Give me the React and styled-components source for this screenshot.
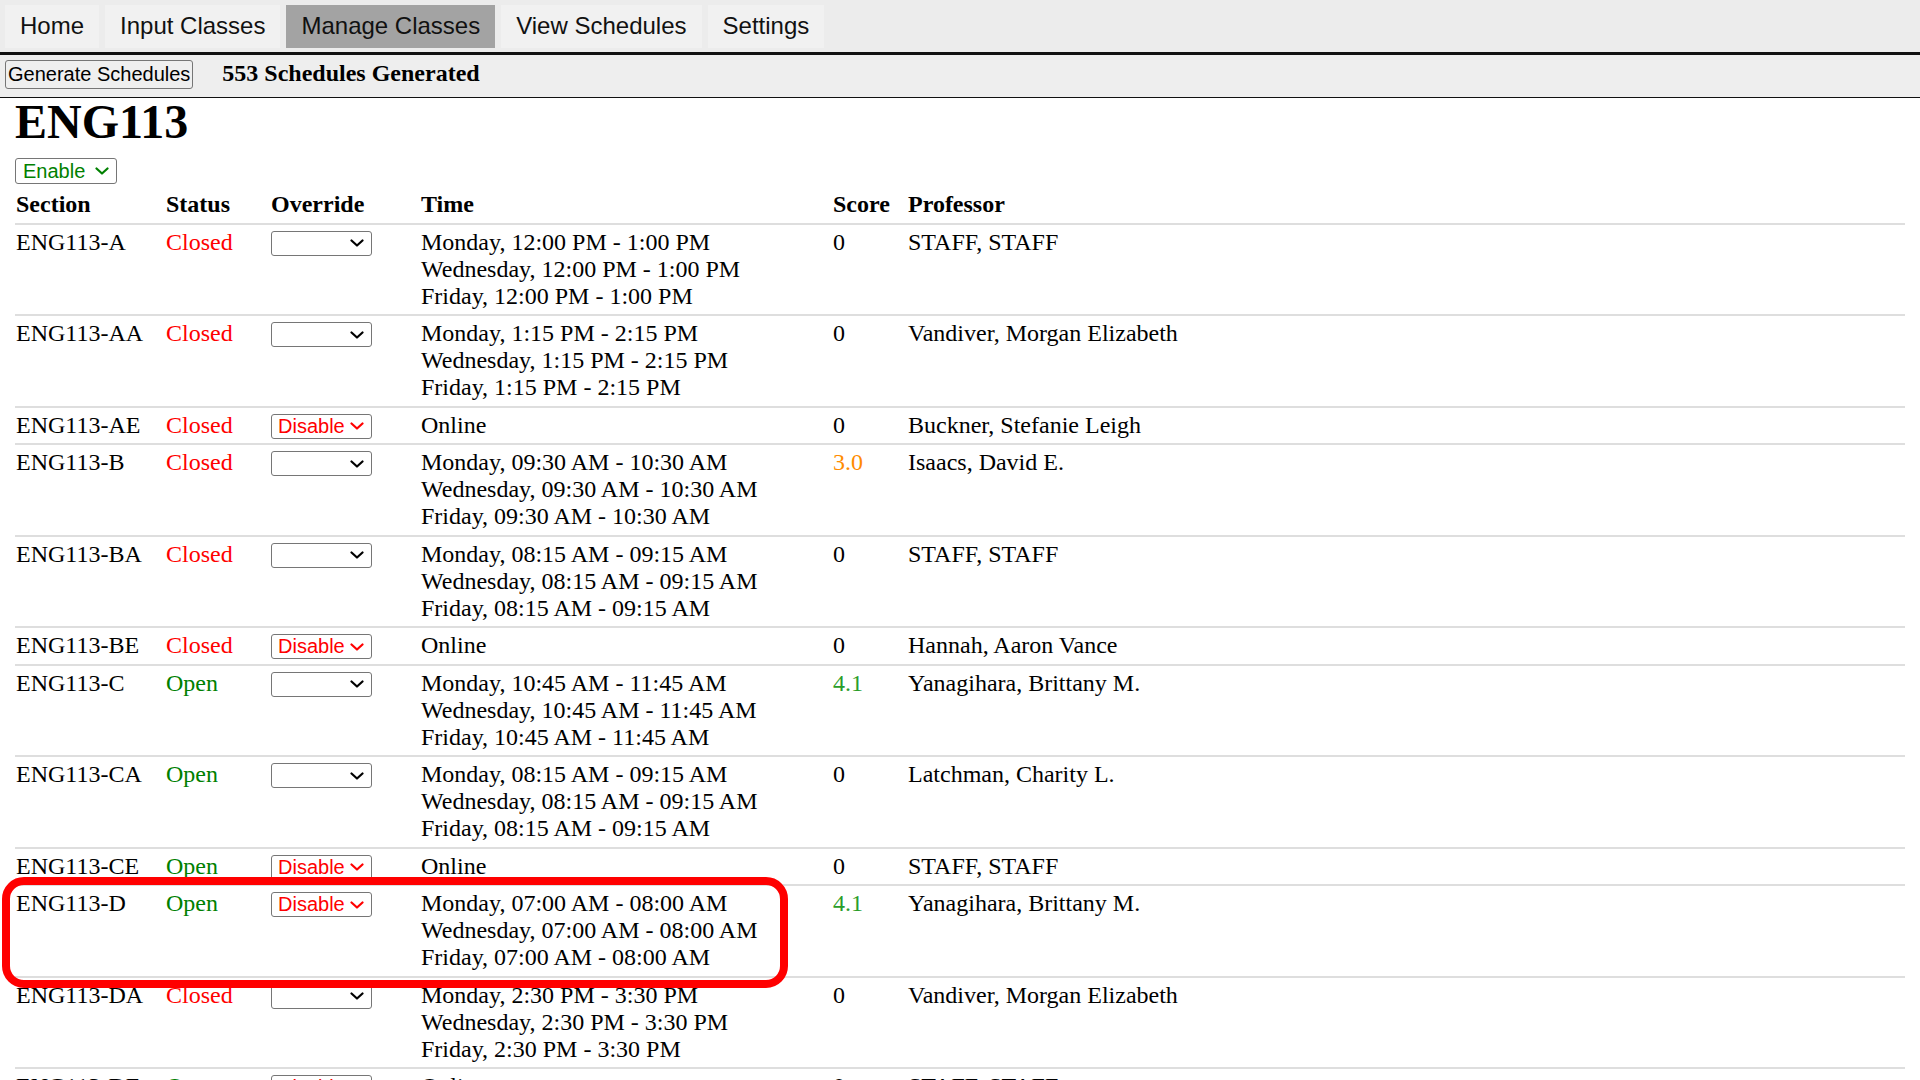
import React from "react";
import styled, { createGlobalStyle } from "styled-components";

const GlobalStyle = createGlobalStyle`
  html, body { margin: 0; padding: 0; overflow: hidden; background: #fff; }
  body { font-family: "Liberation Serif", "Times New Roman", serif; color: #000; }
`;

const Page = styled.div`
  position: relative;
  width: 1920px;
`;

const NavBar = styled.nav`
  display: flex;
  gap: 6px;
  height: 55px;
  box-sizing: border-box;
  padding: 5px 5px 0;
  background: #ececec;
  border-bottom: 3px solid #111;
`;

const NavItem = styled.a`
  display: block;
  height: 43px;
  box-sizing: border-box;
  padding: 7px 15px 9px;
  font-family: "Liberation Sans", Arial, sans-serif;
  font-size: 24px;
  line-height: 27px;
  color: #111;
  text-decoration: none;
  background: ${(p) => (p.$active ? "#a3a3a3" : "#f1f1f1")};
`;

const ActionBar = styled.div`
  display: flex;
  align-items: flex-start;
  height: 43px;
  box-sizing: border-box;
  padding: 5px 5px 0;
  background: #eeeeee;
  border-bottom: 1px solid #111;
`;

const Button = styled.button`
  height: 29px;
  box-sizing: border-box;
  padding: 0 2px;
  font-family: "Liberation Sans", Arial, sans-serif;
  font-size: 20px;
  line-height: 23px;
  color: #000;
  background: #efefef;
  border: 1px solid #767676;
  border-radius: 3px;
`;

const Generated = styled.span`
  margin-left: 29px;
  font-weight: bold;
  font-size: 24px;
  line-height: 27px;
`;

const Content = styled.main`
  padding: 0 15px;
`;

const Title = styled.h1`
  margin: 0;
  font-size: 48px;
  line-height: 48px;
  font-weight: bold;
`;

const SelectBox = styled.div`
  display: flex;
  align-items: center;
  justify-content: space-between;
  box-sizing: border-box;
  width: ${(p) => p.$w}px;
  height: ${(p) => p.$h}px;
  margin: ${(p) => p.$m};
  padding: 0 7px 0 ${(p) => p.$pl}px;
  background: #fff;
  border: 1px solid #767676;
  border-radius: 3px;
  font-family: "Liberation Sans", Arial, sans-serif;
  font-size: 20px;
  line-height: 23px;
  color: ${(p) => p.$color};
`;

const Chevron = ({ color }) => (
  <svg width="14" height="8" viewBox="0 0 14 8" style={{ marginLeft: "auto" }}>
    <path d="M1.5 1.5 L7 6.5 L12.5 1.5" fill="none" stroke={color} strokeWidth="2.2" strokeLinecap="round" strokeLinejoin="round" />
  </svg>
);

const Select = ({ value, color, w = 101, h = 25, m = "2px 0 0", pl = 6 }) => (
  <SelectBox $w={w} $h={h} $m={m} $pl={pl} $color={color}>
    <span>{value}</span>
    <Chevron color={color} />
  </SelectBox>
);

const Table = styled.table`
  width: 100%;
  table-layout: fixed;
  border-collapse: separate;
  border-spacing: 0;
`;

const Col = styled.col`
  width: ${(p) => (p.$w ? `${p.$w}px` : "auto")};
`;

const HeadCell = styled.th`
  padding: 4px 0 4.5px 1px;
  border-bottom: 2px solid #dedede;
  text-align: left;
  vertical-align: top;
  font-size: 24px;
  line-height: 27px;
  font-weight: bold;
  white-space: nowrap;
`;

const Cell = styled.td`
  padding: 4px 0 4.5px 1px;
  border-bottom: 2px solid #dedede;
  vertical-align: top;
  font-size: 24px;
  line-height: 27px;
  white-space: nowrap;
  color: ${(p) => p.$color || "#000"};
`;

const TimeLine = styled.div``;

const Annotation = styled.div`
  position: absolute;
  left: 2px;
  top: 877px;
  width: 786px;
  height: 111px;
  box-sizing: border-box;
  border: 8px solid #ff0000;
  border-radius: 22px;
  pointer-events: none;
`;

const MWF = (t) => [`Monday, ${t}`, `Wednesday, ${t}`, `Friday, ${t}`];

const rows = [
  { s: "ENG113-A", st: "Closed", o: "", t: MWF("12:00 PM - 1:00 PM"), sc: "0", p: "STAFF, STAFF" },
  { s: "ENG113-AA", st: "Closed", o: "", t: MWF("1:15 PM - 2:15 PM"), sc: "0", p: "Vandiver, Morgan Elizabeth" },
  { s: "ENG113-AE", st: "Closed", o: "Disable", t: ["Online"], sc: "0", p: "Buckner, Stefanie Leigh" },
  { s: "ENG113-B", st: "Closed", o: "", t: MWF("09:30 AM - 10:30 AM"), sc: "3.0", p: "Isaacs, David E." },
  { s: "ENG113-BA", st: "Closed", o: "", t: MWF("08:15 AM - 09:15 AM"), sc: "0", p: "STAFF, STAFF" },
  { s: "ENG113-BE", st: "Closed", o: "Disable", t: ["Online"], sc: "0", p: "Hannah, Aaron Vance" },
  { s: "ENG113-C", st: "Open", o: "", t: MWF("10:45 AM - 11:45 AM"), sc: "4.1", p: "Yanagihara, Brittany M." },
  { s: "ENG113-CA", st: "Open", o: "", t: MWF("08:15 AM - 09:15 AM"), sc: "0", p: "Latchman, Charity L." },
  { s: "ENG113-CE", st: "Open", o: "Disable", t: ["Online"], sc: "0", p: "STAFF, STAFF" },
  { s: "ENG113-D", st: "Open", o: "Disable", t: MWF("07:00 AM - 08:00 AM"), sc: "4.1", p: "Yanagihara, Brittany M." },
  { s: "ENG113-DA", st: "Closed", o: "", t: MWF("2:30 PM - 3:30 PM"), sc: "0", p: "Vandiver, Morgan Elizabeth" },
  { s: "ENG113-DE", st: "Open", o: "Disable", t: ["Online"], sc: "0", p: "STAFF, STAFF" },
];

const statusColor = (st) => (st === "Open" ? "#008000" : "#ff0000");
const scoreColor = (sc) => (sc === "3.0" ? "#ff8c00" : sc === "4.1" ? "#2a9d2a" : "#000");

export default function App() {
  return (
    <Page>
      <GlobalStyle />
      <NavBar>
        <NavItem href="#">Home</NavItem>
        <NavItem href="#">Input Classes</NavItem>
        <NavItem href="#" $active>Manage Classes</NavItem>
        <NavItem href="#">View Schedules</NavItem>
        <NavItem href="#">Settings</NavItem>
      </NavBar>
      <ActionBar>
        <Button>Generate Schedules</Button>
        <Generated>553 Schedules Generated</Generated>
      </ActionBar>
      <Content>
        <Title>ENG113</Title>
        <Select value="Enable" color="#008000" w={102} h={26} m="12px 0 3px" pl={7} />
        <Table>
          <colgroup>
            <Col $w={150} />
            <Col $w={105} />
            <Col $w={150} />
            <Col $w={412} />
            <Col $w={75} />
            <Col />
          </colgroup>
          <thead>
            <tr>
              <HeadCell>Section</HeadCell>
              <HeadCell>Status</HeadCell>
              <HeadCell>Override</HeadCell>
              <HeadCell>Time</HeadCell>
              <HeadCell>Score</HeadCell>
              <HeadCell>Professor</HeadCell>
            </tr>
          </thead>
          <tbody>
            {rows.map((r) => (
              <tr key={r.s}>
                <Cell>{r.s}</Cell>
                <Cell $color={statusColor(r.st)}>{r.st}</Cell>
                <Cell>
                  <Select value={r.o} color={r.o ? "#ff0000" : "#000"} />
                </Cell>
                <Cell>
                  {r.t.map((line) => (
                    <TimeLine key={line}>{line}</TimeLine>
                  ))}
                </Cell>
                <Cell $color={scoreColor(r.sc)}>{r.sc}</Cell>
                <Cell>{r.p}</Cell>
              </tr>
            ))}
          </tbody>
        </Table>
      </Content>
      <Annotation />
    </Page>
  );
}
